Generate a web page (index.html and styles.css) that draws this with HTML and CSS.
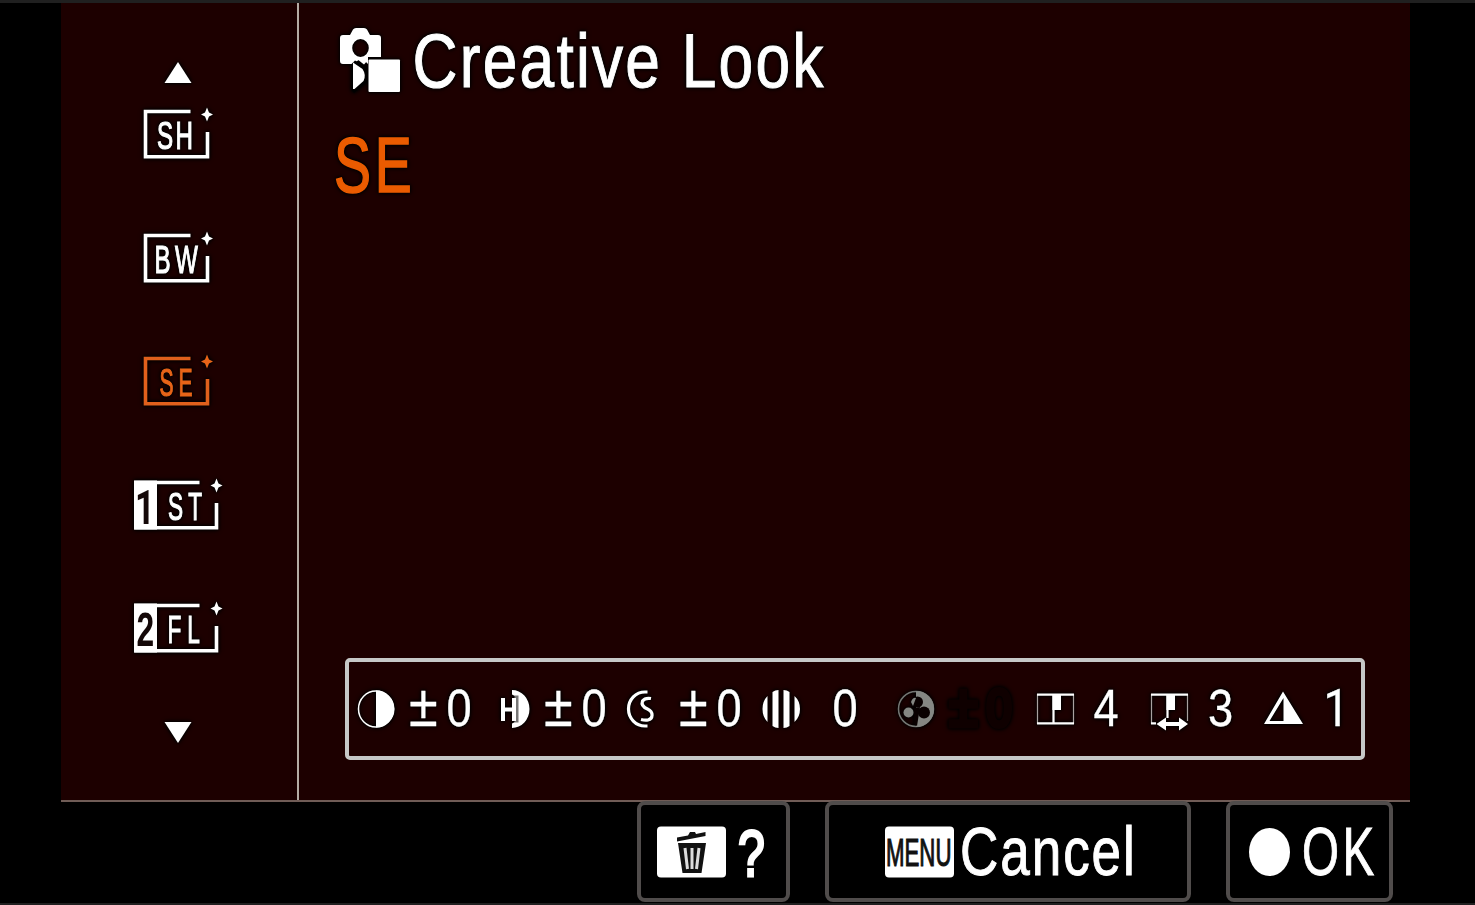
FILE: index.html
```
<!DOCTYPE html>
<html lang="en">
<head>
<meta charset="utf-8">
<title>Creative Look</title>
<link rel="stylesheet" href="styles.css">
</head>
<body>
<div class="monitor">
  <main class="screen">
    <nav class="looks">
      <svg class="arrow up" viewBox="160 58 36 28"><path d="M178 62L191.500 83H164.500Z"/></svg>
      <svg class="look" viewBox="129 100 100 62">
        <path class="frame" d="M190.500 111.500H145.500V156.700H207.500V132"/>
        <path class="spark" d="M207 107.500L209 112.500L213 114.500L209 116.500L207 121.500L205 116.500L201 114.500L205 112.500Z"/>
        <text class="tag" transform="translate(157 149) scale(.62 1)" x="0 30">SH</text>
      </svg>
      <svg class="look" viewBox="129 100 100 62">
        <path class="frame" d="M190.500 111.500H145.500V156.700H207.500V132"/>
        <path class="spark" d="M207 107.500L209 112.500L213 114.500L209 116.500L207 121.500L205 116.500L201 114.500L205 112.500Z"/>
        <text class="tag" transform="translate(154.500 149) scale(.62 1)" x="0 33">BW</text>
      </svg>
      <svg class="look selected" viewBox="129 100 100 62">
        <path class="frame" d="M190.500 111.500H145.500V156.700H207.500V132"/>
        <path class="spark" d="M207 107.500L209 112.500L213 114.500L209 116.500L207 121.500L205 116.500L201 114.500L205 112.500Z"/>
        <text class="tag" transform="translate(159.500 149) scale(.54 1)" x="0 35">SE</text>
      </svg>
      <svg class="look" viewBox="129 100 100 62">
        <path class="plate" d="M134 109.500H157V158.500H134Z"/>
        <path class="frame" d="M199.500 111.500H136V156.700H216.500V132"/>
        <path class="spark" d="M216.500 107.500L218.500 112.500L222.500 114.500L218.500 116.500L216.500 121.500L214.500 116.500L210.500 114.500L214.500 112.500Z"/>
        <text class="slot one" transform="translate(135 152.500) scale(.72 1)">1</text>
        <text class="tag" transform="translate(168 149) scale(.58 1)" x="0 35">ST</text>
      </svg>
      <svg class="look" viewBox="129 100 100 62">
        <path class="plate" d="M134 109.500H157V158.500H134Z"/>
        <path class="frame" d="M199.500 111.500H136V156.700H216.500V132"/>
        <path class="spark" d="M216.500 107.500L218.500 112.500L222.500 114.500L218.500 116.500L216.500 121.500L214.500 116.500L210.500 114.500L214.500 112.500Z"/>
        <text class="slot" transform="translate(136.500 152) scale(.66 1)">2</text>
        <text class="tag" transform="translate(167.500 149) scale(.58 1)" x="0 34">FL</text>
      </svg>
      <svg class="arrow down" viewBox="160 717 36 28"><path d="M164.500 721H191.500L178 742Z"/></svg>
    </nav>
    <section class="detail">
      <header class="heading">
        <svg viewBox="330 12 510 100">
          <path fill-rule="evenodd" d="M343 35H350L353 29.500Q354 28 356 28H364Q366 28 367 29.500L370 35H378Q381 35 381 38V57H368V64L365 61L360 59L353 64H343Q340 64 340 61V38Q340 35 343 35ZM360.500 39A8.300 9 0 1 0 360.500 57A8.300 9 0 1 0 360.500 39Z"/>
          <path class="knock" d="M351.500 64L355 60.500L367 67V82L354 93L351.500 90Z"/>
          <path d="M353 62.500L362.500 69Q366.500 75 363.500 81L354.500 89H353Z"/>
          <path d="M357 59L368 57V60L364 64.500Z"/>
          <rect x="368.500" y="59.500" width="31.500" height="32.500" rx="1"/>
          <text class="title" transform="translate(412.500 86.800) scale(.82 1)">Creative Look</text>
        </svg>
      </header>
      <svg class="current" viewBox="330 112 100 100">
        <text class="title" transform="translate(334 191.500) scale(.72 1)" x="0 56.500">SE</text>
      </svg>
      <div class="params">
        <svg width="141" viewBox="349 679 141 60">
          <ellipse class="line" cx="376" cy="709" rx="17.500" ry="18"/><path d="M376 690.500A18.500 18.500 0 0 1 376 727.500Z"/>
          <text class="value" transform="translate(409 726) scale(.87 1)" x="0 43"><tspan class="sign">±</tspan>0</text>
        </svg>
        <svg width="130" viewBox="490 679 130 60">
          <path d="M512 690A17.500 19 0 0 1 512 728V723.500L515 722V696L512 694.500Z"/>
          <path class="gap" d="M514.500 695.500H518.500V722.500H514.500Z"/>
          <path class="bars" d="M503 698V721M514 698V721M503 709.500H514"/>
          <text class="value" transform="translate(544 726) scale(.87 1)" x="0 43"><tspan class="sign">±</tspan>0</text>
        </svg>
        <svg width="135" viewBox="620 679 135 60">
          <path class="arc" d="M647.500 692H645A16.500 17 0 0 0 645 726H647.500"/>
          <path class="arc" d="M651 698.500Q645 697.500 642.500 701C641 705 644 707.500 647.500 709C654 712 653 719 648 720Q645 720.500 641 719.500"/>
          <text class="value" transform="translate(679 726) scale(.87 1)" x="0 43"><tspan class="sign">±</tspan>0</text>
        </svg>
        <svg width="130" viewBox="755 679 130 60">
          <path d="M767.500 696V722Q762.500 717 762.500 709T767.500 696ZM772.500 692Q775 690 778.500 690V728Q775 728 772.500 726ZM783.500 690Q787 690 789.500 692V726Q787 728 783.500 728ZM794.500 696Q800 701 800 709T794.500 722Z"/>
          <text class="value" transform="translate(832.500 726) scale(.87 1)">0</text>
        </svg>
        <svg width="140" viewBox="885 679 140 60" class="off">
          <circle class="line" cx="916" cy="709" r="17.500"/><path d="M916 691A18 18 0 0 1 916 727Z"/>
          <circle class="hole" cx="917.500" cy="702" r="5.500"/><circle class="hole" cx="924" cy="712.500" r="6"/><circle cx="908.500" cy="712.500" r="5"/><path d="M911 702Q913 697 916 698L913 706Z"/><path class="hole" d="M914 708L920 707L917 726L914 724Z"/>
          <text class="value ghost" transform="translate(949 726) scale(.87 1)" x="0 43"><tspan class="sign">±</tspan>0</text>
        </svg>
        <svg width="115" viewBox="1025 679 115 60">
          <path class="thin" d="M1037.500 694V724M1073.500 694V724"/><path class="edge" d="M1037 694.700H1074M1037 723.300H1074M1053.500 695V723"/><path d="M1052.500 695H1061V710H1052.500Z"/>
          <text class="value" transform="translate(1093.500 726) scale(.87 1)">4</text>
        </svg>
        <svg width="115" viewBox="1140 679 115 60">
          <path class="thin" d="M1151.500 694V724M1187.500 694V721"/><path class="edge" d="M1151 694.700H1188M1151 723.300H1156M1167.500 695V718"/><path d="M1166.500 695H1175V710H1166.500Z"/>
          <path d="M1156.500 724L1166 717.500V722H1179V717.500L1188 724L1179 730.500V726H1166V730.500Z"/>
          <text class="value" transform="translate(1208 726) scale(.87 1)">3</text>
        </svg>
        <svg width="106" viewBox="1255 679 106 60">
          <path fill-rule="evenodd" d="M1283 691.500L1303 724H1264ZM1283.500 698L1269.500 721H1283.500Z"/>
          <text class="value one" transform="translate(1323.500 726) scale(.87 1)">1</text>
        </svg>
      </div>
    </section>
  </main>
  <footer class="keys">
    <div class="key help">
      <svg viewBox="641 804 145 94">
        <rect x="657" y="825.500" width="69" height="51" rx="4"/>
        <path class="ink" d="M677 836.500L688 834.500L690 831L695 831L696 833L705.500 831V835L677 840.500ZM678 842H706L701.500 872H682.500Z"/>
        <path class="slits" d="M685 847L687.500 868M692 847V868M699 847L696.500 868"/>
        <text class="mark" transform="translate(738 874.500) scale(.74 1)">?</text>
      </svg>
    </div>
    <div class="key cancel">
      <svg viewBox="829 804 358 94">
        <rect x="885" y="825.500" width="69" height="51" rx="4"/>
        <text class="menu" transform="translate(886 864.500) scale(.57 1)">MENU</text>
        <text class="label" transform="translate(960 873.500) scale(.78 1)">Cancel</text>
      </svg>
    </div>
    <div class="key ok">
      <svg viewBox="1230 804 159 94">
        <ellipse cx="1269.500" cy="851" rx="20.500" ry="24"/>
        <text class="label" transform="translate(1302 873.500) scale(.7 1)" x="0 58">OK</text>
      </svg>
    </div>
  </footer>
</div>
</body>
</html>
```
FILE: styles.css
```
* { box-sizing: border-box; }
body { margin: 0; background: #000; }
svg { display: block; fill: #fff; overflow: visible; flex: none; }
text { font-family: "Liberation Sans", Arial, sans-serif; }

.monitor {
  width: 1475px;
  height: 905px;
  display: flex;
  flex-direction: column;
  overflow: hidden;
  background: #000;
  border-top: 3px solid #202020;
  border-bottom: 2px solid #202020;
}
.screen {
  display: flex;
  width: 1349px;
  height: 799px;
  margin-left: 61px;
  background: #1d0000;
  border-bottom: 2px solid #705c56;
}

.looks {
  width: 238px;
  padding: 55px 0 0;
  display: flex;
  flex-direction: column;
  align-items: center;
  border-right: 2px solid #b5aca4;
}
.looks svg, .heading svg, .current, .params svg {
  filter: drop-shadow(0 0 2px #000) drop-shadow(0 0 1px #000);
}
.arrow { width: 36px; height: 28px; }
.arrow.up { margin: 0 2px 14px 0; }
.arrow.down { margin: 0 2px 0 0; }
.look { width: 100px; height: 62px; margin-bottom: 61.6px; }
.frame { fill: none; stroke: #fff; stroke-width: 3.6; }
.tag { font-size: 39px; stroke: #fff; stroke-width: 1.2; }
.slot { font-size: 48px; font-weight: bold; fill: #140808; }
.selected { fill: #e86418; }
.selected .frame { stroke: #e0601c; }
.selected .tag { stroke: #e86418; }

.detail { padding: 9px 0 0 31px; }
.heading svg { width: 510px; height: 100px; }
.title { font-size: 76px; letter-spacing: 2.700px; stroke: #fff; stroke-width: 1; }
.knock { fill: #000; }
.current { width: 100px; height: 100px; fill: #ea5b00; }
.current .title { font-size: 77px; stroke: #ea5b00; stroke-width: 1.6; }

.params {
  display: flex;
  align-items: center;
  width: 1020px;
  height: 102px;
  margin: 446px 0 0 15px;
  border: 4px solid #c6c8c7;
  border-radius: 5px;
}
.params svg { height: 60px; }
.value { font-size: 52px; stroke: #fff; stroke-width: .3; }
.sign { font-size: 60px; }
.one { font-family: Roboto, sans-serif; }
.line { fill: none; stroke: #fff; stroke-width: 1.5; }
.bars { fill: none; stroke: #fff; stroke-width: 4; }
.gap { fill: #777; }
.arc { fill: none; stroke: #fff; stroke-width: 3.200; }
.edge { fill: none; stroke: #fff; stroke-width: 2.200; }
.thin { fill: none; stroke: #a9a2a0; stroke-width: 1.200; }
.off { fill: #858783; }
.off .line { stroke: #747673; }
.off .hole { fill: #090000; }
.off .ghost { fill: #0f0000; stroke: #0f0000; stroke-width: 5; }

.keys { display: flex; height: 101px; padding-left: 637px; margin-top: -1px; }
.key { height: 101px; border: 4px solid #504c4b; border-radius: 8px; background: #000; }
.help { width: 153px; }
.cancel { width: 366px; margin-left: 35px; }
.ok { width: 167px; margin-left: 35px; }
.key svg { height: 94px; }
.help svg { width: 145px; }
.cancel svg { width: 358px; }
.ok svg { width: 159px; }
.ink { fill: #111; }
.slits { fill: none; stroke: #ddd; stroke-width: 3; }
.mark { font-size: 65px; stroke: #fff; stroke-width: 3; }
.menu { font-size: 39px; fill: #111; stroke: #111; stroke-width: 1.200; }
.label { font-size: 68px; letter-spacing: 2.500px; stroke: #fff; stroke-width: 1; }
```
